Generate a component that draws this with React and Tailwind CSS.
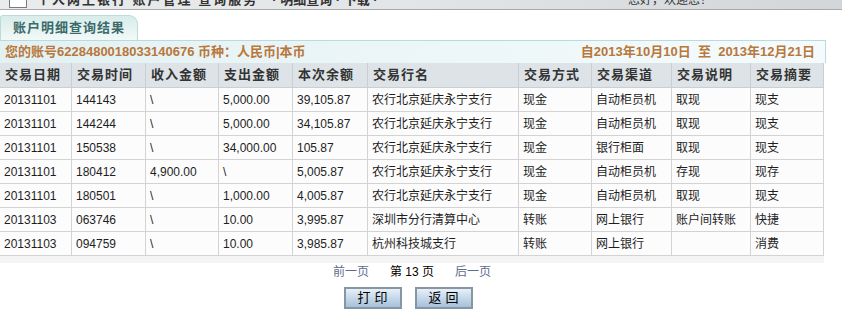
import React from "react";

const font = { fontFamily: '"Liberation Sans", "Noto Sans CJK SC", sans-serif' };

const headers = ["交易日期", "交易时间", "收入金额", "支出金额", "本次余额", "交易行名", "交易方式", "交易渠道", "交易说明", "交易摘要"];

const rows = [
  ["20131101", "144143", "\\", "5,000.00", "39,105.87", "农行北京延庆永宁支行", "现金", "自动柜员机", "取现", "现支"],
  ["20131101", "144244", "\\", "5,000.00", "34,105.87", "农行北京延庆永宁支行", "现金", "自动柜员机", "取现", "现支"],
  ["20131101", "150538", "\\", "34,000.00", "105.87", "农行北京延庆永宁支行", "现金", "银行柜面", "取现", "现支"],
  ["20131101", "180412", "4,900.00", "\\", "5,005.87", "农行北京延庆永宁支行", "现金", "自动柜员机", "存现", "现存"],
  ["20131101", "180501", "\\", "1,000.00", "4,005.87", "农行北京延庆永宁支行", "现金", "自动柜员机", "取现", "现支"],
  ["20131103", "063746", "\\", "10.00", "3,995.87", "深圳市分行清算中心", "转账", "网上银行", "账户间转账", "快捷"],
  ["20131103", "094759", "\\", "10.00", "3,985.87", "杭州科技城支行", "转账", "网上银行", "", "消费"],
];

const cols = "grid grid-cols-[72px_74px_73px_74px_75px_151px_73px_80px_79px_73px]";

export default function App() {
  return (
    <div className="w-[846px] h-[324px] bg-white overflow-hidden text-[#222]" style={font}>
      {/* top strip (cut off) */}
      <div className="w-[842px] h-[10px] overflow-hidden border-b border-[#a9a9a9] bg-gradient-to-r from-[#e9ebec] via-[#e2e5e7] to-[#d3d6d8]">
        <div className="-mt-[10px] h-[20px] flex items-center pl-[9px]">
          <div className="w-[18px] h-[16px] bg-white border border-[#7b7b7b] mr-[10px]" />
          <span className="text-[13px] font-bold text-[#333] tracking-[2px]">个人网上银行 账户管理 查询服务</span>
          <span className="ml-[14px] text-[13px] font-bold text-[#333]">· 明细查询 · 下载 ·</span>
          <span className="ml-auto mr-[130px] text-[12px] text-[#333]">您好，欢迎您！</span>
        </div>
      </div>

      {/* tab */}
      <div className="mt-[5px] w-[138px] h-[25px] rounded-tr-[9px] rounded-tl-[3px] border border-b-0 border-[#bcdcd9] bg-gradient-to-b from-[#d8ecea] to-[#f2f9f8] flex items-center pl-[12px]">
        <span className="text-[13px] font-bold text-[#3b6a6a] tracking-[1px]">账户明细查询结果</span>
      </div>

      <div className="w-[826px]">
        {/* account bar */}
        <div className="h-[23px] border-t border-r border-[#b9dadf] bg-gradient-to-r from-[#e3f1f3] to-[#f5fbfc] flex items-center justify-between pl-[5px] pr-[10px] text-[13px] font-bold text-[#b8773b]">
          <span>您的账号6228480018033140676 币种：人民币|本币</span>
          <span>自2013年10月10日&nbsp;&nbsp;至&nbsp;&nbsp;2013年12月21日</span>
        </div>

        {/* table */}
        <div className="w-[824px]">
          <div className={`${cols} h-[25px] bg-[#dde3e6]`}>
            {headers.map((h, i) => (
              <div key={i} className="border-r border-b border-[#c9cfd2] flex items-center pl-[5px] text-[13px] font-bold text-[#333] tracking-[1px]">
                {h}
              </div>
            ))}
          </div>
          {rows.map((r, ri) => (
            <div key={ri} className={`${cols} h-[24px] bg-[#fcfcfc]`}>
              {r.map((c, ci) => (
                <div key={ci} className="border-r border-b border-[#d3d3d3] flex items-center pl-[4px] text-[12px] text-[#1e1e1e] whitespace-nowrap">
                  {c}
                </div>
              ))}
            </div>
          ))}
          <div className="h-[7px] bg-[#f4f4f4]" />
        </div>

        {/* pagination */}
        <div className="w-[824px] flex justify-center items-center gap-[21px] mt-[1px] h-[16px] text-[12px]">
          <span className="text-[#5f6b8c]">前一页</span>
          <span className="text-black">第 13 页</span>
          <span className="text-[#5f6b8c]">后一页</span>
        </div>

        {/* buttons */}
        <div className="w-[824px] flex justify-center gap-[13px] mt-[7px] pr-[8px]">
          <button className="w-[58px] h-[22px] border-2 border-[#8796a3] bg-gradient-to-b from-[#e8f0f7] to-[#a5c1db] text-[13px] text-black tracking-[4px] pl-[4px] flex items-center justify-center">
            打印
          </button>
          <button className="w-[58px] h-[22px] border-2 border-[#8796a3] bg-gradient-to-b from-[#e8f0f7] to-[#a5c1db] text-[13px] text-black tracking-[4px] pl-[4px] flex items-center justify-center">
            返回
          </button>
        </div>
      </div>
    </div>
  );
}
